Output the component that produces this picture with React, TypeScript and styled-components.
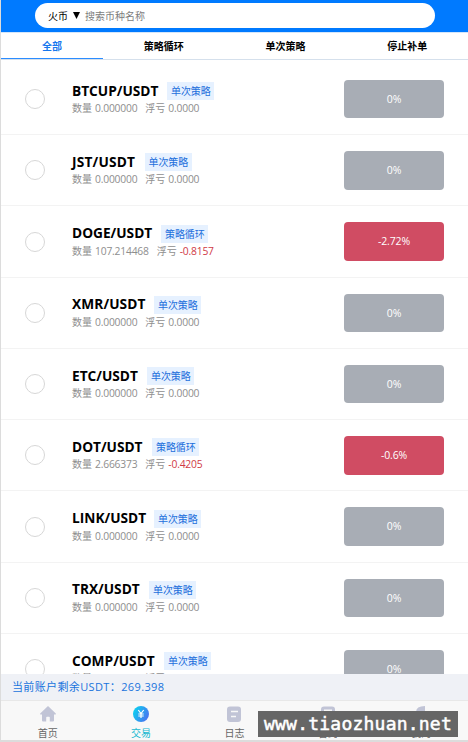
import React from 'react';
import styled, { createGlobalStyle } from 'styled-components';

const GlobalStyle = createGlobalStyle`
  * { box-sizing: border-box; }
  body {
    margin: 0;
    background: #fff;
    font-family: 'Open Sans', 'Noto Sans CJK SC', sans-serif;
    font-size: 10px;
    color: #000;
  }
`;

const Screen = styled.div`
  position: relative;
  display: flex;
  flex-direction: column;
  width: 468px;
  height: 742px;
  overflow: hidden;
  white-space: nowrap;
  border-left: 1px solid #dcdcdc;
`;

const Header = styled.header`
  flex: none;
  height: 32px;
  padding: 3px 33px 0 34px;
  background: #007aff;
`;

const SearchBox = styled.div`
  display: flex;
  align-items: center;
  height: 25px;
  padding: 0 13px 1px;
  border-radius: 13px;
  background: #fff;
`;

const Exchange = styled.span`
  width: 20px;
`;

const Caret = styled.svg`
  width: 7px;
  height: 7px;
  margin: 0 5px 0 5px;
`;

const Placeholder = styled.span`
  color: #7d7d7d;
`;

const Tabs = styled.nav`
  flex: none;
  display: flex;
  height: 28px;
  border-top: 1px solid #d4e6fa;
  border-bottom: 1px solid #d5e0ec;
`;

const Tab = styled.div<{ $active?: boolean }>`
  flex: ${(p) => (p.$active ? '0 0 102px' : '1 1 0')};
  display: flex;
  align-items: center;
  justify-content: center;
  height: 26px;
  font-weight: 700;
  color: ${(p) => (p.$active ? '#1677ee' : '#000')};
  border-bottom: 1px solid ${(p) => (p.$active ? '#2b8cff' : 'transparent')};
`;

const List = styled.main`
  flex: 1;
  min-height: 0;
  padding-top: 3.9px;
  overflow: hidden;
`;

const Row = styled.div`
  display: flex;
  align-items: center;
  height: 71.25px;
  padding: 0 24px;
  border-bottom: 1px solid #f3f3f3;
`;

const Radio = styled.span`
  flex: none;
  width: 20px;
  height: 20px;
  margin-right: 27px;
  border: 1px solid #d7d7d7;
  border-radius: 50%;
`;

const Info = styled.div`
  flex: 1;
`;

const Title = styled.div`
  display: flex;
  align-items: center;
  height: 19px;
  margin-top: -1px;
`;

const Pair = styled.span<{ $width: number; $tracking?: number }>`
  width: ${(p) => p.$width}px;
  margin-right: 8px;
  font: 700 13.7px/18px 'Open Sans', sans-serif;
  letter-spacing: ${(p) => p.$tracking ?? 0}px;
`;

const Tag = styled.span`
  width: 47px;
  height: 18px;
  margin-top: 1px;
  padding-left: 4px;
  line-height: 18px;
  letter-spacing: -0.1px;
  color: #1c6fdc;
  background: #e6f1ff;
`;

const Detail = styled.div`
  display: flex;
  height: 15px;
  margin-top: 1px;
  line-height: 15px;
  color: #8e8e8e;
`;

const Figure = styled.span<{ $loss?: boolean }>`
  margin: 0 8px 0 3px;
  font-size: 10.3px;
  letter-spacing: -0.2px;
  color: ${(p) => (p.$loss ? '#d03a46' : 'inherit')};
`;

const Change = styled.div<{ $loss: boolean }>`
  flex: none;
  width: 100px;
  height: 38.5px;
  line-height: 38.5px;
  text-align: center;
  border-radius: 4px;
  font-size: 10.5px;
  letter-spacing: -0.15px;
  color: #fff;
  background: ${(p) => (p.$loss ? '#d04c63' : '#a8adb5')};
`;

const Balance = styled.div`
  flex: none;
  height: 26px;
  padding-left: 11px;
  font-size: 11px;
  line-height: 26px;
  letter-spacing: 0.37px;
  color: #1974dd;
  background: #eff1f6;
`;

const BottomNav = styled.nav`
  flex: none;
  display: grid;
  grid-template-columns: repeat(5, 1fr);
  height: 42px;
  padding-top: 4px;
  border-top: 1px solid #e8e8e8;
  border-bottom: 2px solid #dcdcdc;
  background: #f8f8f8;
`;

const NavItem = styled.div<{ $active?: boolean }>`
  display: flex;
  flex-direction: column;
  align-items: center;
  line-height: 14px;
  color: ${(p) => (p.$active ? '#20b8d0' : '#666')};

  svg {
    width: 18px;
    height: 18px;
    margin-bottom: 3px;
    fill: #c1c4d6;
  }
`;

const Watermark = styled.div`
  position: absolute;
  left: 257px;
  top: 711px;
  width: 200px;
  height: 26px;
  padding-left: 6px;
  font: 400 18px/25px 'DejaVu Sans Mono', monospace;
  letter-spacing: 0.22px;
  -webkit-text-stroke: 0.5px #fff;
  color: #fff;
  background: #666;
`;

const HomeIcon = () => (
  <svg viewBox="0 0 18 18">
    <path d="M9 1 1.2 8.600q-.6.9.5.9H3v6q0 1 1 1h3.200v-4q0-.8.8-.8h2q.8 0 .8.8v4H14q1 0 1-1v-6h1.300q1.100 0 .5-.9Z" />
  </svg>
);

const TradeIcon = () => (
  <svg viewBox="0 0 18 18">
    <defs>
      <linearGradient id="coin" x1="0" x2="1" y1="0" y2=".5">
        <stop offset="0.2" stopColor="#10c8f0" />
        <stop offset="1" stopColor="#4678f0" />
      </linearGradient>
    </defs>
    <circle cx="9" cy="9" r="8" fill="url(#coin)" />
    <path d="m6.300 5 2.700 3.600L11.700 5M6.300 9h5.400M6.300 11h5.400M9 8.600V13" fill="none" stroke="#fff" strokeWidth="1.200" />
  </svg>
);

const LogIcon = () => (
  <svg viewBox="0 0 18 18">
    <rect x="2" y="1.500" width="14" height="15.500" rx="3" />
    <path d="M6 6.500h7M6 11.500h5" stroke="#f8f8f8" strokeWidth="1.500" />
  </svg>
);

const ContractIcon = () => (
  <svg viewBox="0 0 18 18">
    <rect x="2" y="1.500" width="14" height="15.500" rx="3" />
    <path d="M5 5.500h8" stroke="#f8f8f8" strokeWidth="2" />
  </svg>
);

const ProfileIcon = () => (
  <svg viewBox="0 0 18 18">
    <path d="M13 1v6q0 2 2 3l2 5v2H1v-2l3-5V7q0-6 9-6Z" />
  </svg>
);

type Market = {
  symbol: string;
  width: number;
  tracking?: number;
  strategy: string;
  quantity: string;
  float: string;
  change: string;
};

const idle = { strategy: '单次策略', quantity: '0.000000', float: '0.0000', change: '0%' };

const markets: Market[] = [
  { ...idle, symbol: 'BTCUP', width: 87 },
  { ...idle, symbol: 'JST', width: 64.5, tracking: 0.2 },
  { symbol: 'DOGE', width: 81, strategy: '策略循环', quantity: '107.214468', float: '-0.8157', change: '-2.72%' },
  { ...idle, symbol: 'XMR', width: 74, tracking: 0.1 },
  { ...idle, symbol: 'ETC', width: 67 },
  { symbol: 'DOT', width: 72, strategy: '策略循环', quantity: '2.666373', float: '-0.4205', change: '-0.6%' },
  { ...idle, symbol: 'LINK', width: 74 },
  { ...idle, symbol: 'TRX', width: 69 },
  { ...idle, symbol: 'COMP', width: 84 },
];

const MarketRow = ({ symbol, width, tracking, strategy, quantity, float, change }: Market) => (
  <Row>
    <Radio />
    <Info>
      <Title>
        <Pair $width={width} $tracking={tracking}>{symbol}/USDT</Pair>
        <Tag>{strategy}</Tag>
      </Title>
      <Detail>
        数量<Figure>{quantity}</Figure>
        浮亏<Figure $loss={float.startsWith('-')}>{float}</Figure>
      </Detail>
    </Info>
    <Change $loss={change.startsWith('-')}>{change}</Change>
  </Row>
);

export default function App() {
  return (
    <>
      <GlobalStyle />
      <Screen>
        <Header>
          <SearchBox>
            <Exchange>火币</Exchange>
            <Caret viewBox="0 0 7 7"><path d="M0 0h7L3.500 7Z" /></Caret>
            <Placeholder>搜索币种名称</Placeholder>
          </SearchBox>
        </Header>
        <Tabs>
          <Tab $active>全部</Tab>
          <Tab>策略循环</Tab>
          <Tab>单次策略</Tab>
          <Tab>停止补单</Tab>
        </Tabs>
        <List>
          {markets.map((m) => <MarketRow key={m.symbol} {...m} />)}
        </List>
        <Balance>当前账户剩余USDT：269.398</Balance>
        <BottomNav>
          <NavItem><HomeIcon />首页</NavItem>
          <NavItem $active><TradeIcon />交易</NavItem>
          <NavItem><LogIcon />日志</NavItem>
          <NavItem><ContractIcon />合约</NavItem>
          <NavItem><ProfileIcon />我的</NavItem>
        </BottomNav>
        <Watermark>www.tiaozhuan.net</Watermark>
      </Screen>
    </>
  );
}
